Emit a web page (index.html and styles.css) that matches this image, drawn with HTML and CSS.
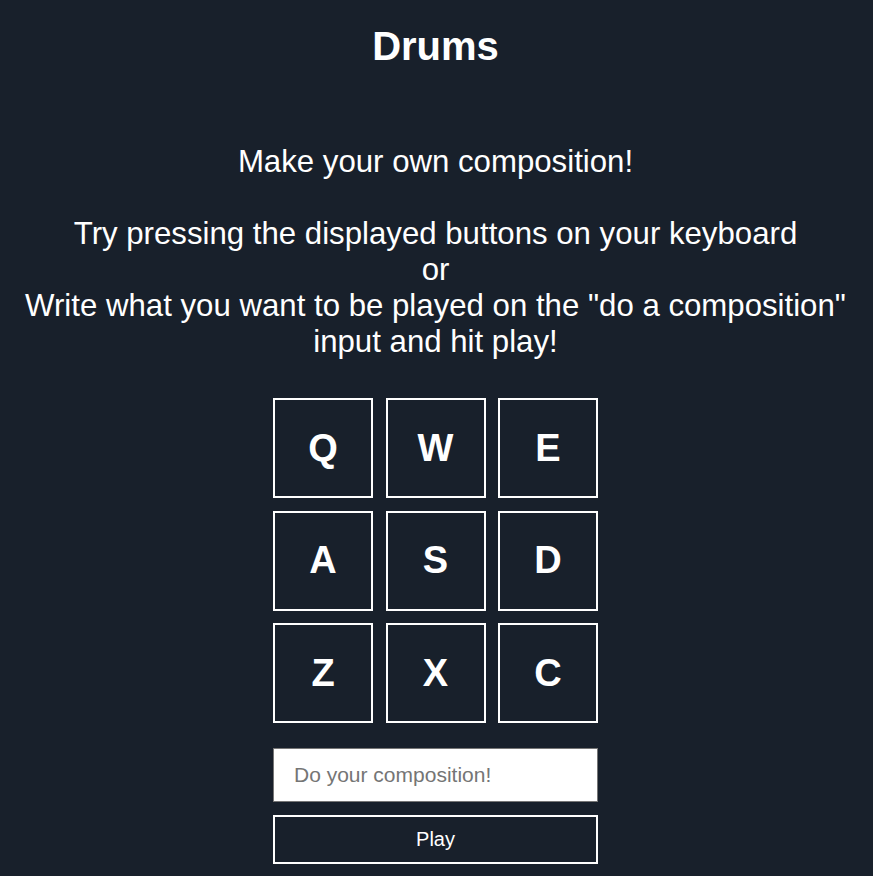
FILE: index.html
```html
<!DOCTYPE html>
<html lang="en">
<head>
<meta charset="utf-8">
<title>Drums</title>
<link rel="stylesheet" href="styles.css">
</head>
<body>
<main class="page">
  <h1 class="title">Drums</h1>
  <p class="intro">Make your own composition!<br><br>Try pressing the displayed buttons on your keyboard<br>or<br>Write what you want to be played on the "do a composition"<br>input and hit play!</p>
  <div class="pad">
    <div class="key">Q</div>
    <div class="key">W</div>
    <div class="key">E</div>
    <div class="key">A</div>
    <div class="key">S</div>
    <div class="key">D</div>
    <div class="key">Z</div>
    <div class="key">X</div>
    <div class="key">C</div>
  </div>
  <div class="controls">
    <input class="composer" type="text" placeholder="Do your composition!">
    <button class="play" type="button">Play</button>
  </div>
</main>
</body>
</html>
```
FILE: styles.css
```css
html, body {
  margin: 0;
  padding: 0;
  background: #18202b;
}
body {
  font-family: "Liberation Sans", Arial, sans-serif;
  color: #ffffff;
}
.page {
  display: flex;
  flex-direction: column;
  align-items: center;
  text-align: center;
  padding-right: 2px;
}
.title {
  margin: 23px 0 0;
  font-size: 40px;
  line-height: 46px;
  font-weight: 700;
}
.intro {
  margin: 75px 0 0;
  font-size: 31.2px;
  line-height: 36px;
}
.pad {
  margin-top: 38px;
  width: 325px;
  display: grid;
  grid-template-columns: repeat(3, 100px);
  grid-auto-rows: 100px;
  justify-content: space-between;
  row-gap: 12.5px;
}
.key {
  box-sizing: border-box;
  border: 2px solid #ffffff;
  display: flex;
  align-items: center;
  justify-content: center;
  font-size: 38px;
  font-weight: 700;
}
.controls {
  margin-top: 25px;
  width: 325px;
  display: flex;
  flex-direction: column;
  gap: 13px;
}
.composer {
  box-sizing: border-box;
  width: 100%;
  height: 54px;
  margin: 0;
  padding: 0 20px;
  border: 1px solid #767676;
  background: #ffffff;
  font-family: "Liberation Sans", Arial, sans-serif;
  font-size: 21px;
  color: #222;
  outline: none;
}
.composer::placeholder {
  color: #757575;
}
.play {
  box-sizing: border-box;
  width: 100%;
  height: 49px;
  margin: 0;
  border: 2px solid #ffffff;
  background: transparent;
  color: #ffffff;
  font-family: "Liberation Sans", Arial, sans-serif;
  font-size: 20px;
  cursor: pointer;
}
```
